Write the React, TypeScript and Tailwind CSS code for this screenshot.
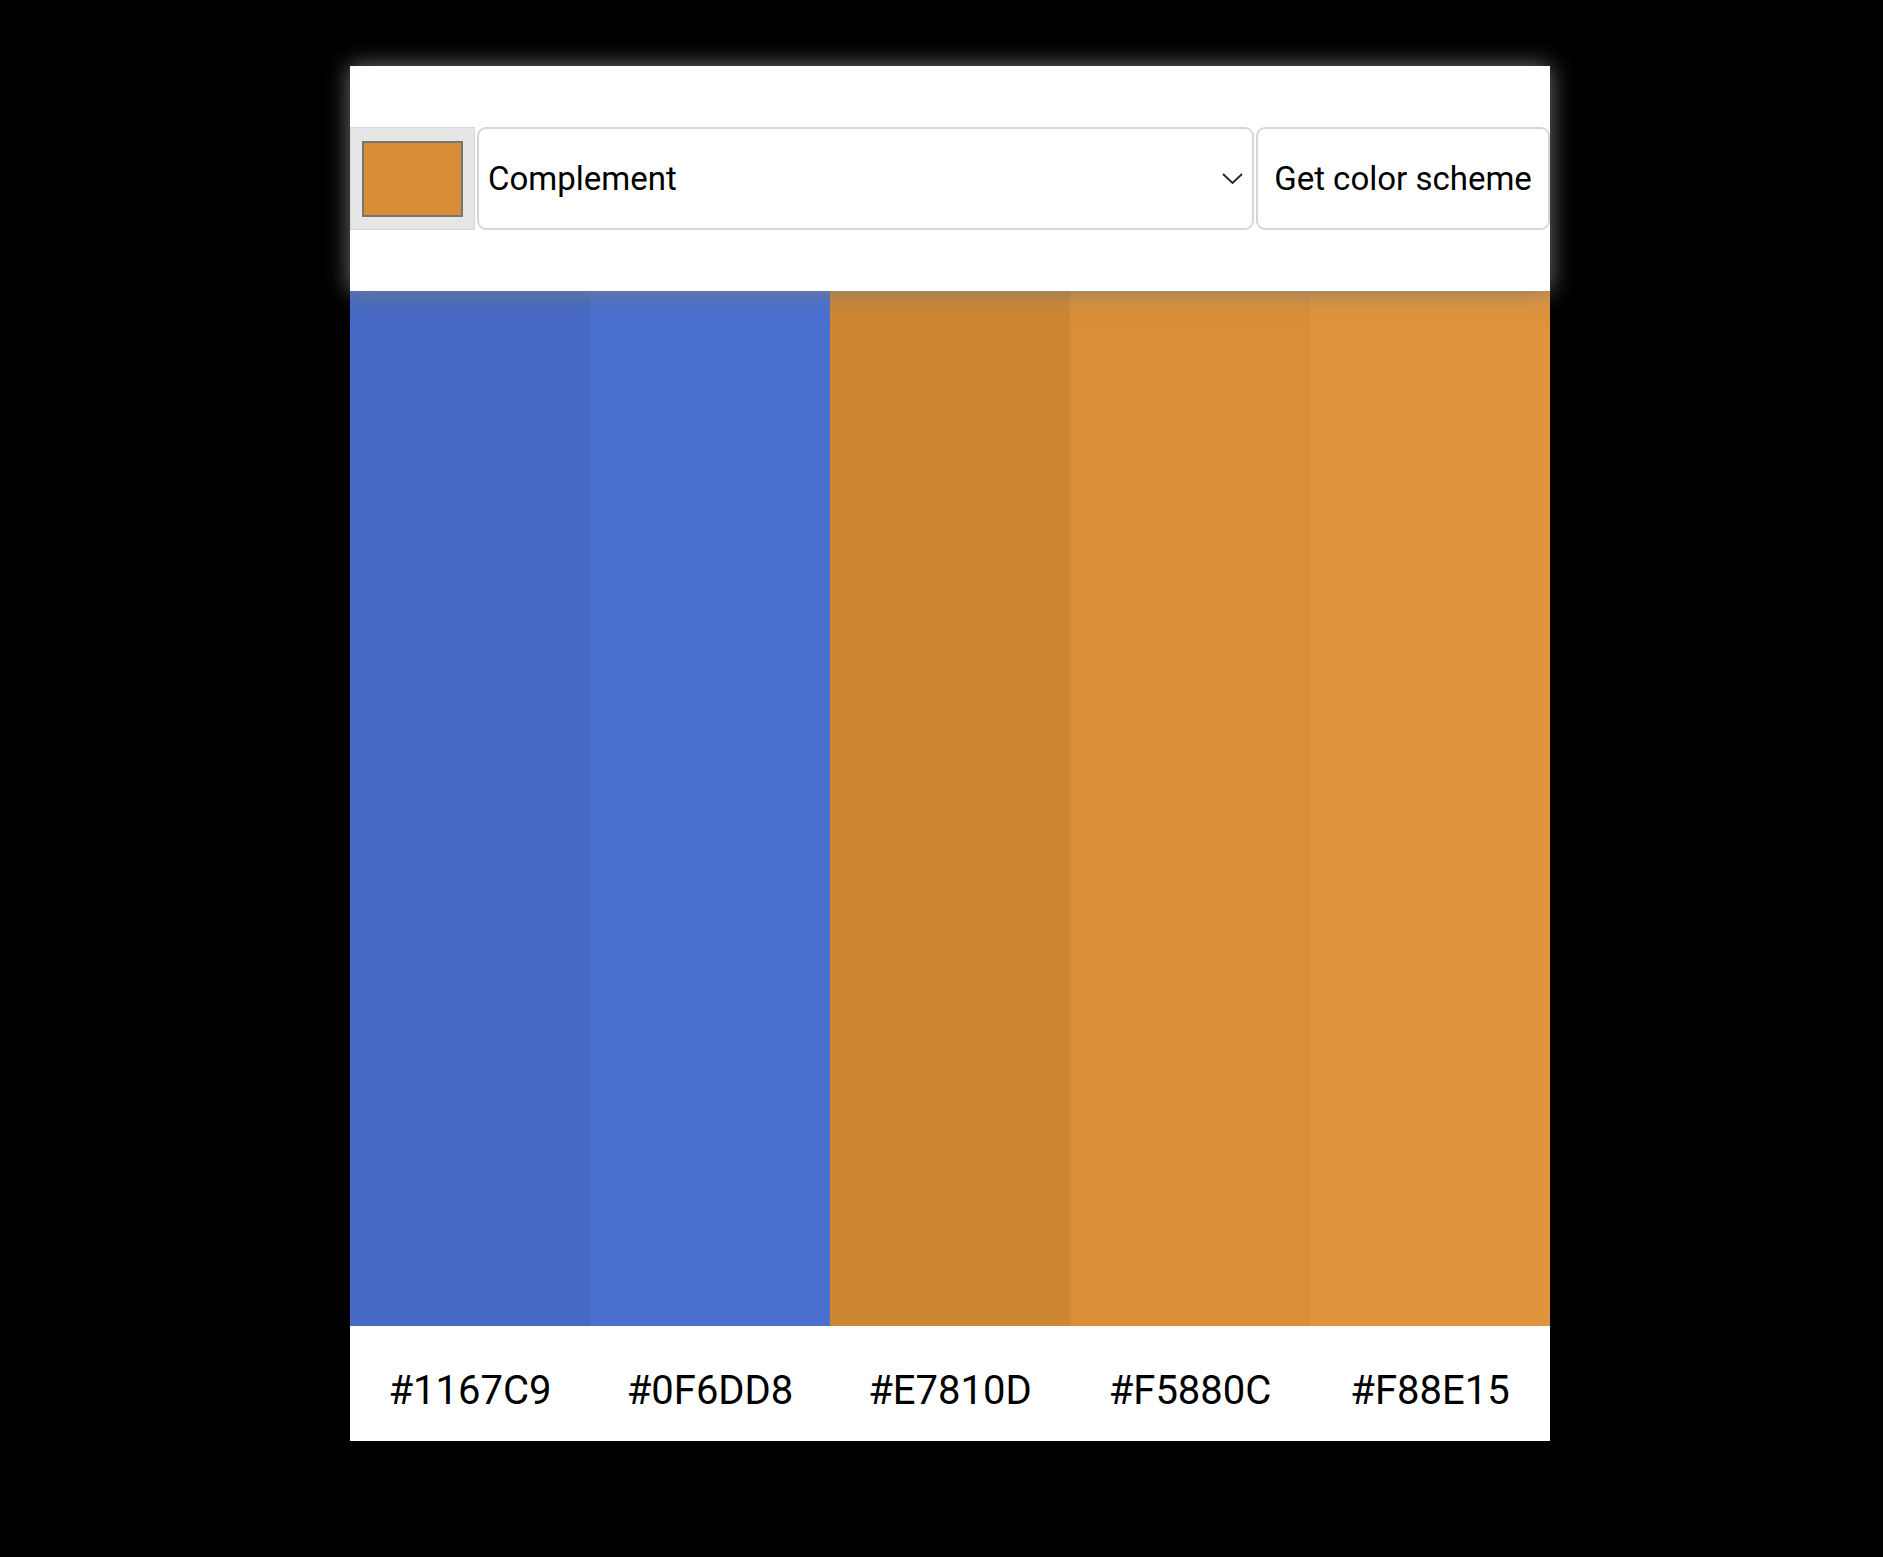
import React from "react";

const swatches = [
  { hex: "#1167C9", bg: "bg-[#4669c3]" },
  { hex: "#0F6DD8", bg: "bg-[#4a6fd0]" },
  { hex: "#E7810D", bg: "bg-[#cd8633]" },
  { hex: "#F5880C", bg: "bg-[#da8e38]" },
  { hex: "#F88E15", bg: "bg-[#de933c]" },
];

const App = () => {
  return (
    <div className="min-h-screen bg-black pt-[66px] pl-[350px] font-['Roboto',sans-serif]">
      <div className="w-[1200px] bg-white">
        <header className="relative z-10 h-[225px] flex items-center gap-[2px] bg-white shadow-[0_0_22px_rgba(125,125,125,0.95)]">
          <div className="w-[125px] h-[103px] shrink-0 bg-[#e6e6e6] border border-[#d6d6d6] flex items-center justify-center">
            <div className="w-[101px] h-[76px] bg-[#da8d37] border-2 border-[#767676]"></div>
          </div>
          <div className="flex-1 h-[103px] border-2 border-[#d6d6d6] rounded-[9px] flex items-center justify-between pl-[9px] pr-[9px]">
            <span className="text-[33px] text-black">Complement</span>
            <svg width="21" height="12" viewBox="0 0 21 12" fill="none">
              <path d="M1 1 L10.5 10 L20 1" stroke="#222" strokeWidth="1.8" />
            </svg>
          </div>
          <button className="w-[294px] h-[103px] shrink-0 border-2 border-[#d6d6d6] rounded-[9px] bg-white text-[33px] text-black">
            Get color scheme
          </button>
        </header>
        <div className="grid grid-cols-5 h-[1035px]">
          {swatches.map((s) => (
            <div key={s.hex} className={s.bg}></div>
          ))}
        </div>
        <div className="grid grid-cols-5 h-[115px] pt-[14px]">
          {swatches.map((s) => (
            <div key={s.hex} className="flex items-center justify-center text-[40px] text-black">
              {s.hex}
            </div>
          ))}
        </div>
      </div>
    </div>
  );
};

export default App;
